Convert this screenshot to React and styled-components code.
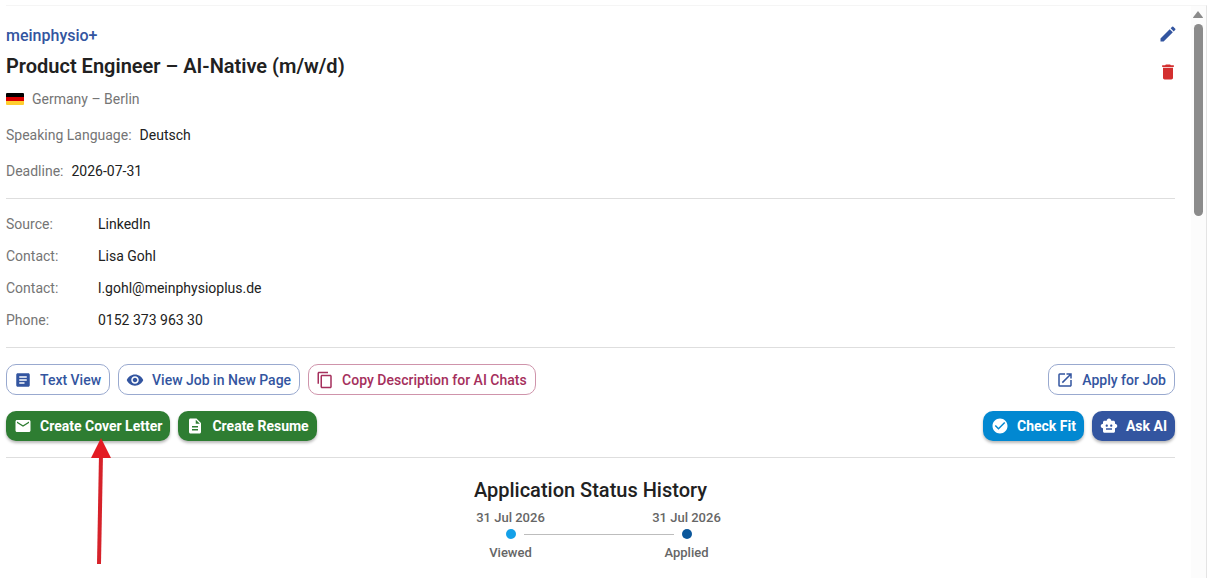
import styled, { createGlobalStyle } from "styled-components";
import {
  MdArticle,
  MdCheckCircle,
  MdContentCopy,
  MdDelete,
  MdDescription,
  MdEdit,
  MdEmail,
  MdOpenInNew,
  MdSmartToy,
  MdVisibility,
} from "react-icons/md";

const GlobalStyle = createGlobalStyle`
  *, *::before, *::after {
    box-sizing: border-box;
  }

  body {
    margin: 0;
    background-color: #fff;
    color: #212121;
    font-family: Roboto, "Liberation Sans", sans-serif;
    font-size: 14px;
    line-height: 20px;
  }
`;

const Page = styled.div`
  display: flex;
  min-height: 100vh;
  padding: 5px 6px 0;
`;

const Content = styled.main`
  flex: 1;
  min-width: 0;
  padding: 18px 16px 0 0;
  border-top: 1px solid #f5f5f5;
`;

const ScrollTrack = styled.div`
  width: 16px;
  padding: 5px 3px 0 2px;
  display: flex;
  flex-direction: column;
  align-items: center;
  gap: 6px;
  background-color: #fcfcfc;
  border-top: 1px solid #f5f5f5;
  border-right: 1px solid #e4e4e4;
`;

const ScrollArrow = styled.svg`
  display: block;
  width: 10px;
  height: 7px;
  fill: #8b8b8b;
`;

const ScrollThumb = styled.div`
  width: 9px;
  height: 192px;
  border-radius: 5px;
  background-color: #8b8b8b;
`;

const Header = styled.header`
  display: flex;
  justify-content: space-between;
  align-items: flex-start;
  padding-bottom: 17px;
`;

const Company = styled.a`
  display: block;
  color: #3355a0;
  font-size: 16px;
  font-weight: 500;
  line-height: 24px;
  text-decoration: none;
`;

const Title = styled.h1`
  margin: 3px 0 8px;
  font-size: 20px;
  font-weight: 600;
  line-height: 30px;
`;

const Location = styled.div`
  display: flex;
  align-items: center;
  gap: 8px;
  margin-bottom: 16px;
  color: #757575;
`;

const Flag = styled.svg`
  width: 18px;
  height: 12px;
  border-radius: 1px;
`;

const Fact = styled.div`
  display: flex;
  gap: 8px;

  & + & {
    margin-top: 16px;
  }
`;

const Label = styled.span`
  color: #757575;
`;

const HeaderActions = styled.div`
  display: flex;
  flex-direction: column;
  gap: 18px;
  margin-right: -3px;
`;

const IconButton = styled.button`
  display: flex;
  padding: 0;
  border: 0;
  background: none;
  color: ${({ $color }) => $color};
  font-size: 20px;
  cursor: pointer;
`;

const Divider = styled.hr`
  margin: 0;
  border: 0;
  border-top: 1px solid #dedede;
`;

const Details = styled.dl`
  display: grid;
  grid-template-columns: 80px 1fr;
  gap: 12px;
  margin: 0;
  padding: 15px 0 17px;

  dt {
    color: #757575;
  }

  dd {
    margin: 0;
  }
`;

const Toolbar = styled.div`
  display: flex;
  flex-direction: column;
  gap: 16px;
  padding: 16px 0;
`;

const ButtonRow = styled.div`
  display: flex;
  justify-content: space-between;
`;

const ButtonGroup = styled.div`
  display: flex;
  gap: 8px;
`;

const Button = styled.button`
  display: flex;
  align-items: center;
  gap: 8px;
  height: ${({ $filled }) => ($filled ? 30 : 31)}px;
  padding: ${({ $filled }) => ($filled ? "0 8px" : "0 8px 0 7px")};
  border: ${({ $filled }) => ($filled ? "0" : "1px solid")};
  border-color: ${({ $border }) => $border};
  border-radius: 10px;
  background-color: ${({ $filled, $color }) => ($filled ? $color : "#fff")};
  color: ${({ $filled, $color }) => ($filled ? "#fff" : $color)};
  box-shadow: ${({ $filled }) =>
    $filled ? "0 2px 3px rgba(0, 0, 0, 0.28)" : "none"};
  font-family: inherit;
  font-size: 14px;
  font-weight: ${({ $filled }) => ($filled ? 700 : 500)};
  line-height: 20px;
  white-space: nowrap;
  cursor: pointer;

  svg {
    width: 18px;
    height: 18px;
  }
`;

const History = styled.section`
  display: flex;
  flex-direction: column;
  align-items: center;
  padding-top: 16px;
`;

const HistoryTitle = styled.h2`
  margin: 0;
  font-size: 20px;
  font-weight: 500;
  line-height: 32px;
`;

const Timeline = styled.ol`
  display: grid;
  grid-template-columns: repeat(2, 176px);
  margin: 4px 0 0;
  padding: 0 0 0 16px;
  list-style: none;
  color: #666;
  font-size: 13px;
  font-weight: 500;
  line-height: 16px;
  text-align: center;
`;

const Marker = styled.div`
  display: flex;
  align-items: center;
  gap: 8px;
  height: 16px;
`;

const Line = styled.span`
  flex: 1;
  height: 1px;
  background-color: ${({ $visible }) => ($visible ? "#bdbdbd" : "transparent")};
`;

const Dot = styled.span`
  width: 10px;
  height: 10px;
  border-radius: 50%;
  background-color: ${({ $color }) => $color};
`;

const StepLabel = styled.div`
  margin-top: 3px;
`;

const ButtonAnchor = styled.div`
  position: relative;
`;

const Pointer = styled.svg`
  position: absolute;
  top: 27px;
  left: 84px;
  width: 22px;
  height: 128px;
  pointer-events: none;
`;

const BLUE = "#3355a0";
const BLUE_BORDER = "#99a9cf";
const GREEN = "#2e7d32";

const details = [
  ["Source:", "LinkedIn"],
  ["Contact:", "Lisa Gohl"],
  ["Contact:", "l.gohl@meinphysioplus.de"],
  ["Phone:", "0152 373 963 30"],
];

const steps = [
  { date: "31 Jul 2026", label: "Viewed", color: "#14a0e8" },
  { date: "31 Jul 2026", label: "Applied", color: "#0b579b" },
];

const JobHeader = () => (
  <Header>
    <div>
      <Company href="#company">meinphysio+</Company>
      <Title>Product Engineer – AI-Native (m/w/d)</Title>
      <Location>
        <Flag viewBox="0 0 18 12" role="img" aria-label="Germany">
          <rect width="18" height="4" fill="#000" />
          <rect y="4" width="18" height="4" fill="#d80000" />
          <rect y="8" width="18" height="4" fill="#ffce2e" />
        </Flag>
        <span>Germany – Berlin</span>
      </Location>
      <Fact>
        <Label>Speaking Language:</Label>
        <span>Deutsch</span>
      </Fact>
      <Fact>
        <Label>Deadline:</Label>
        <span>2026-07-31</span>
      </Fact>
    </div>
    <HeaderActions>
      <IconButton $color={BLUE} aria-label="Edit job">
        <MdEdit />
      </IconButton>
      <IconButton $color="#d32f2f" aria-label="Delete job">
        <MdDelete />
      </IconButton>
    </HeaderActions>
  </Header>
);

const JobToolbar = () => (
  <Toolbar>
    <ButtonRow>
      <ButtonGroup>
        <Button $color={BLUE} $border={BLUE_BORDER}>
          <MdArticle /> Text View
        </Button>
        <Button $color={BLUE} $border={BLUE_BORDER}>
          <MdVisibility /> View Job in New Page
        </Button>
        <Button $color="#a52f5c" $border="#cf94ab">
          <MdContentCopy /> Copy Description for AI Chats
        </Button>
      </ButtonGroup>
      <Button $color={BLUE} $border={BLUE_BORDER}>
        <MdOpenInNew /> Apply for Job
      </Button>
    </ButtonRow>
    <ButtonRow>
      <ButtonGroup>
        <ButtonAnchor>
          <Button $filled $color={GREEN}>
            <MdEmail /> Create Cover Letter
          </Button>
          <Pointer viewBox="0 0 22 128" aria-hidden="true">
            <path d="M11 16 9 126" stroke="#d6222a" strokeWidth="4" />
            <path d="M11 0 21 20H1z" fill="#e31b23" />
          </Pointer>
        </ButtonAnchor>
        <Button $filled $color={GREEN}>
          <MdDescription /> Create Resume
        </Button>
      </ButtonGroup>
      <ButtonGroup>
        <Button $filled $color="#0288d1">
          <MdCheckCircle /> Check Fit
        </Button>
        <Button $filled $color={BLUE}>
          <MdSmartToy /> Ask AI
        </Button>
      </ButtonGroup>
    </ButtonRow>
  </Toolbar>
);

const StatusHistory = () => (
  <History>
    <HistoryTitle>Application Status History</HistoryTitle>
    <Timeline>
      {steps.map((step, i) => (
        <li key={step.label}>
          <div>{step.date}</div>
          <Marker>
            <Line $visible={i > 0} />
            <Dot $color={step.color} />
            <Line $visible={i < steps.length - 1} />
          </Marker>
          <StepLabel>{step.label}</StepLabel>
        </li>
      ))}
    </Timeline>
  </History>
);

const App = () => (
  <>
    <GlobalStyle />
    <Page>
      <Content>
        <JobHeader />
        <Divider />
        <Details>
          {details.map(([label, value]) => [
            <dt key={`${value}-label`}>{label}</dt>,
            <dd key={value}>{value}</dd>,
          ])}
        </Details>
        <Divider />
        <JobToolbar />
        <Divider />
        <StatusHistory />
      </Content>
      <ScrollTrack aria-hidden="true">
        <ScrollArrow viewBox="0 0 10 7">
          <path d="M5 0 10 6.5Q10 7 9 7H1Q0 7 0 6.5z" />
        </ScrollArrow>
        <ScrollThumb />
      </ScrollTrack>
    </Page>
  </>
);

export default App;
